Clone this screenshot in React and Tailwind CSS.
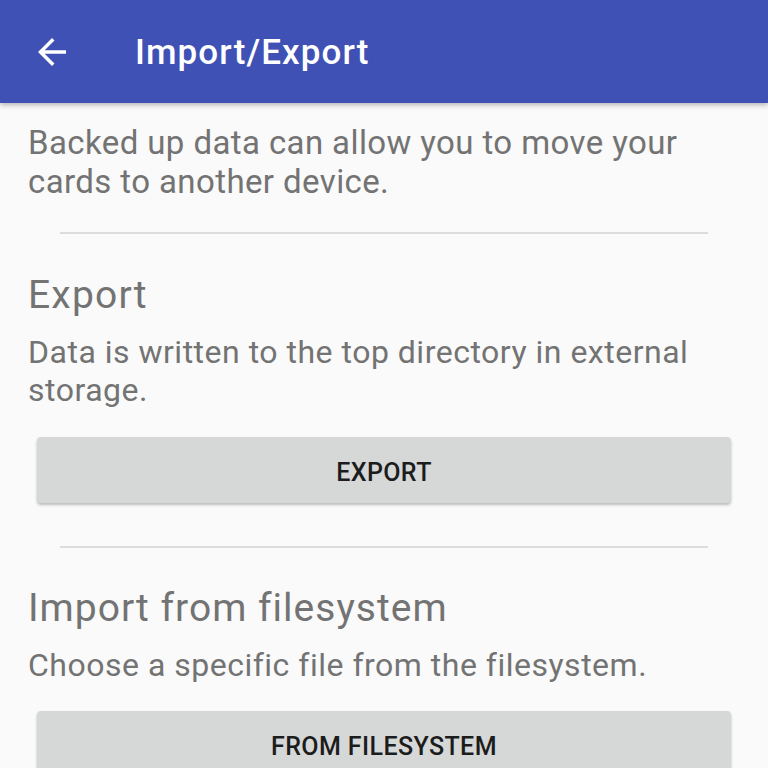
export default function App() {
  return (
    <div className="w-[768px] h-[768px] overflow-hidden bg-[#fafafa] flex flex-col" style={{ fontFamily: "Roboto, 'Noto Sans', sans-serif" }}>
      <header className="relative z-10 h-[103px] shrink-0 bg-[#3f51b5] flex items-center shadow-[0_2px_5px_rgba(0,0,0,0.28)]">
        <div className="w-[42px] h-[42px] ml-[31px] flex items-center justify-center">
          <svg width="42" height="42" viewBox="0 0 24 24" fill="#ffffff">
            <path d="M20 11H7.83l5.59-5.59L12 4l-8 8 8 8 1.41-1.41L7.83 13H20v-2z" />
          </svg>
        </div>
        <h1 className="ml-[62px] mt-[2px] text-white text-[35px] font-medium leading-none tracking-[1.1px]">Import/Export</h1>
      </header>
      <main className="flex flex-col px-[28px] pt-[20px]">
        <p className="text-[33px] leading-[39px] text-[#737373] tracking-[0.4px]">
          Backed up data can allow you to move your cards to another device.
        </p>
        <div className="mx-[32px] mt-[31px] h-[2px] shrink-0 bg-[#dcdcdc]" />
        <h2 className="mt-[38px] text-[39px] leading-[46px] text-[#737373] tracking-[1.2px]">Export</h2>
        <p className="mt-[15px] text-[32px] leading-[38px] text-[#737373] tracking-[0.5px]">
          Data is written to the top directory in external storage.
        </p>
        <button className="mt-[28px] mx-[9px] h-[66px] shrink-0 pt-[5px] rounded-[4px] bg-[#d6d7d7] shadow-[0_2px_3px_rgba(0,0,0,0.25)] text-[25px] font-medium text-[#1c1c1c] tracking-[0.4px]">
          EXPORT
        </button>
        <div className="mx-[32px] mt-[43px] h-[2px] shrink-0 bg-[#dcdcdc]" />
        <h2 className="mt-[37px] text-[39px] leading-[46px] text-[#737373] tracking-[1px]">Import from filesystem</h2>
        <p className="mt-[15px] text-[32px] leading-[38px] text-[#737373] tracking-[0.5px]">
          Choose a specific file from the filesystem.
        </p>
        <button className="mt-[27px] mx-[9px] h-[66px] shrink-0 pt-[5px] rounded-[4px] bg-[#d6d7d7] shadow-[0_2px_3px_rgba(0,0,0,0.25)] text-[25px] font-medium text-[#1c1c1c] tracking-[0.4px]">
          FROM FILESYSTEM
        </button>
      </main>
    </div>
  );
}
